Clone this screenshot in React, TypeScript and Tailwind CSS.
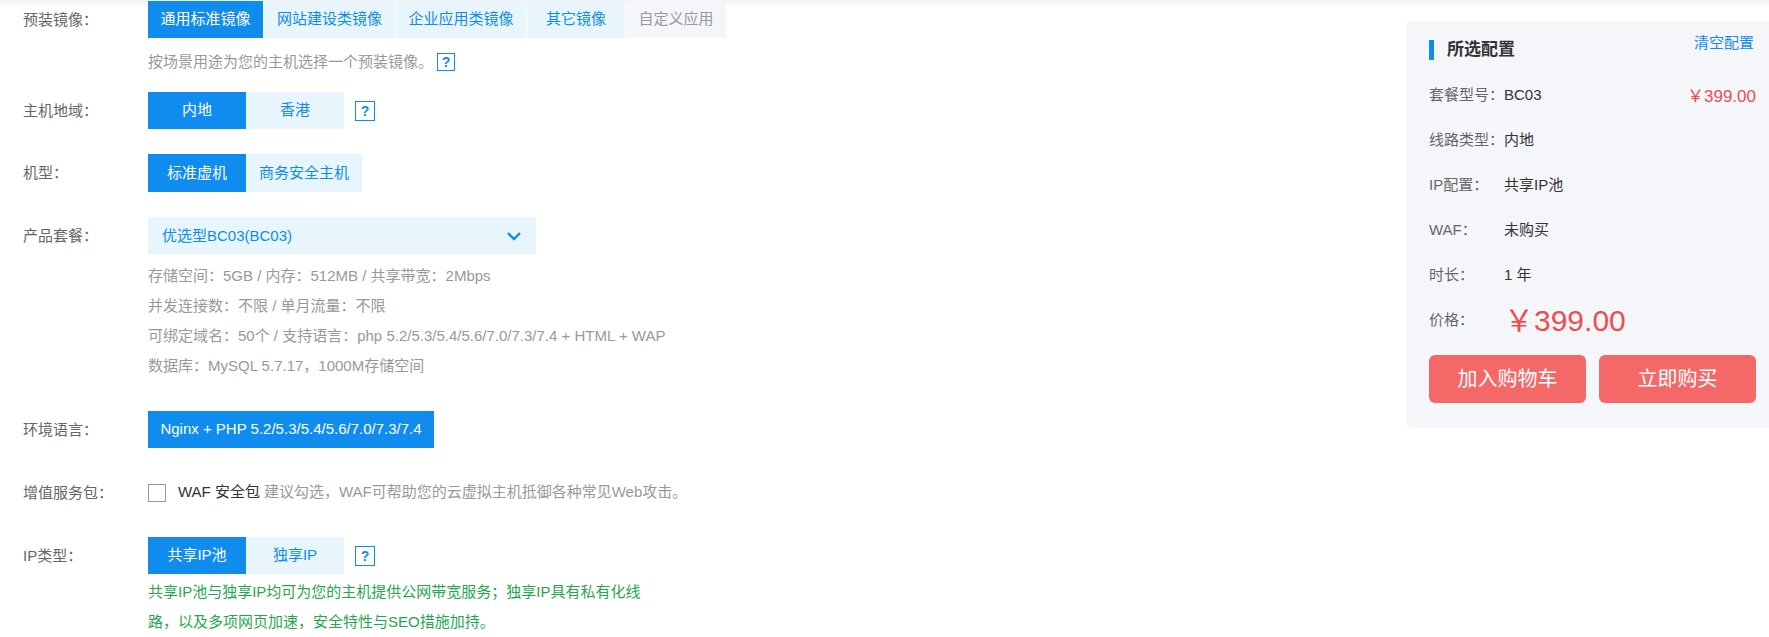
import React from 'react';

const Help = ({ className = '' }: { className?: string }) => (
  <span className={`inline-flex items-center justify-center border border-[#0f8cee] text-[#0f8cee] font-bold text-[14px] leading-none ${className}`}>?</span>
);

const Row = ({ label, className = '', children }: { label: string; className?: string; children: React.ReactNode }) => (
  <div className={`flex ${className}`}>
    <div className="w-[125px] shrink-0 h-[37px] leading-[37px] text-[#666]">{label}</div>
    <div className="flex-1">{children}</div>
  </div>
);

const Tab = ({ active, className = '', children }: { active?: boolean; className?: string; children: React.ReactNode }) => (
  <div className={`flex items-center justify-center ${active ? 'bg-[#0f8cee] text-white' : 'bg-[#e8f5fd] text-[#0f8cee]'} ${className}`}>{children}</div>
);

const Summary = ({ label, value, className = '' }: { label: string; value: string; className?: string }) => (
  <div className={`flex items-center h-[45px] ${className}`}>
    <span className="w-[75px] text-[#666]">{label}</span>
    <span className="text-[#333]">{value}</span>
  </div>
);

export default function App() {
  return (
    <div className="relative flex justify-between h-[637px] overflow-hidden bg-white text-[15px] font-['Liberation_Sans','Noto_Sans_CJK_SC',sans-serif]">
      {/* top shadow */}
      <div className="absolute top-0 inset-x-0 h-[8px] bg-gradient-to-b from-[#f3f3f3] to-white" />

      <div className="relative pl-[23px] pt-[1px] w-[740px]">
        <Row label="预装镜像：" className="mb-[18px]">
          <div className="flex gap-px h-[37px]">
            <Tab active className="w-[115px]">通用标准镜像</Tab>
            <Tab className="w-[131px]">网站建设类镜像</Tab>
            <Tab className="w-[130px]">企业应用类镜像</Tab>
            <Tab className="w-[98px]">其它镜像</Tab>
            <div className="w-[100px] flex items-center justify-center bg-[#f5f6fa] text-[#999]">自定义应用</div>
          </div>
          <div className="flex items-center h-[24px] mt-[12px] text-[#999]">
            按场景用途为您的主机选择一个预装镜像。
            <Help className="w-[18px] h-[18px] ml-[4px]" />
          </div>
        </Row>

        <Row label="主机地域：" className="mb-[25px]">
          <div className="flex items-center h-[37px]">
            <Tab active className="w-[98px] h-full">内地</Tab>
            <Tab className="w-[98px] h-full">香港</Tab>
            <Help className="w-[20px] h-[20px] ml-[11px]" />
          </div>
        </Row>

        <Row label="机型：" className="mb-[25px]">
          <div className="flex h-[38px]">
            <Tab active className="w-[98px]">标准虚机</Tab>
            <Tab className="w-[116px]">商务安全主机</Tab>
          </div>
        </Row>

        <Row label="产品套餐：" className="mb-[30px]">
          <div className="flex items-center justify-between w-[388px] h-[37px] pl-[14px] pr-[14px] bg-[#e8f5fd] text-[#0f8cee]">
            <span className="pt-[2px]">优选型BC03(BC03)</span>
            <svg width="16" height="10" viewBox="0 0 16 10" fill="none" stroke="#0f8cee" strokeWidth="2.4">
              <path d="M2 2l6 6 6-6" />
            </svg>
          </div>
          <div className="mt-[7px] leading-[30px] text-[#999]">
            <p>存储空间：5GB / 内存：512MB / 共享带宽：2Mbps</p>
            <p>并发连接数：不限 / 单月流量：不限</p>
            <p>可绑定域名：50个 / 支持语言：php 5.2/5.3/5.4/5.6/7.0/7.3/7.4 + HTML + WAP</p>
            <p>数据库：MySQL 5.7.17，1000M存储空间</p>
          </div>
        </Row>

        <Row label="环境语言：" className="mb-[26px]">
          <Tab active className="w-[286px] h-[37px]">Nginx + PHP 5.2/5.3/5.4/5.6/7.0/7.3/7.4</Tab>
        </Row>

        <Row label="增值服务包：" className="mb-[26px]">
          <div className="flex items-center h-[37px]">
            <span className="w-[18px] h-[18px] border border-[#999] bg-white" />
            <span className="ml-[12px] text-[#333]">WAF 安全包</span>
            <span className="ml-[4px] text-[#999]">建议勾选，WAF可帮助您的云虚拟主机抵御各种常见Web攻击。</span>
          </div>
        </Row>

        <Row label="IP类型：">
          <div className="flex items-center h-[37px]">
            <Tab active className="w-[98px] h-full">共享IP池</Tab>
            <Tab className="w-[98px] h-full">独享IP</Tab>
            <Help className="w-[20px] h-[20px] ml-[11px]" />
          </div>
          <p className="w-[500px] mt-[3px] leading-[30px] text-[#1fa84f]">
            共享IP池与独享IP均可为您的主机提供公网带宽服务；独享IP具有私有化线路，以及多项网页加速，安全特性与SEO措施加持。
          </p>
        </Row>
      </div>

      <aside className="relative mt-[21px] w-[363px] h-[407px] pl-[23px] pr-[13px] pt-[19px] rounded-l-[6px] bg-[#f5f6fa]">
        <div className="flex justify-between h-[33px]">
          <div className="flex items-center h-[20px]">
            <span className="w-[5px] h-[20px] bg-[#0f8cee]" />
            <span className="ml-[13px] text-[17px] font-bold text-[#333]">所选配置</span>
          </div>
          <span className="text-[#0f8cee] -mt-[8px] h-[20px] pr-[2px]">清空配置</span>
        </div>
        <div className="relative">
          <Summary label="套餐型号：" value="BC03" />
          <span className="absolute right-0 top-[11px] text-[17px] text-[#f04c51]">￥399.00</span>
          <Summary label="线路类型：" value="内地" />
          <Summary label="IP配置：" value="共享IP池" />
          <Summary label="WAF：" value="未购买" />
          <Summary label="时长：" value="1 年" />
        </div>
        <div className="flex items-center h-[44px]">
          <span className="w-[75px] text-[#666]">价格：</span>
          <span className="text-[30px] text-[#f04c51]">￥399.00</span>
        </div>
        <div className="flex justify-between mt-[13px]">
          <button className="w-[157px] h-[48px] rounded-[6px] bg-[#f56868] text-white text-[20px]">加入购物车</button>
          <button className="w-[157px] h-[48px] rounded-[6px] bg-[#f56868] text-white text-[20px]">立即购买</button>
        </div>
      </aside>
    </div>
  );
}
